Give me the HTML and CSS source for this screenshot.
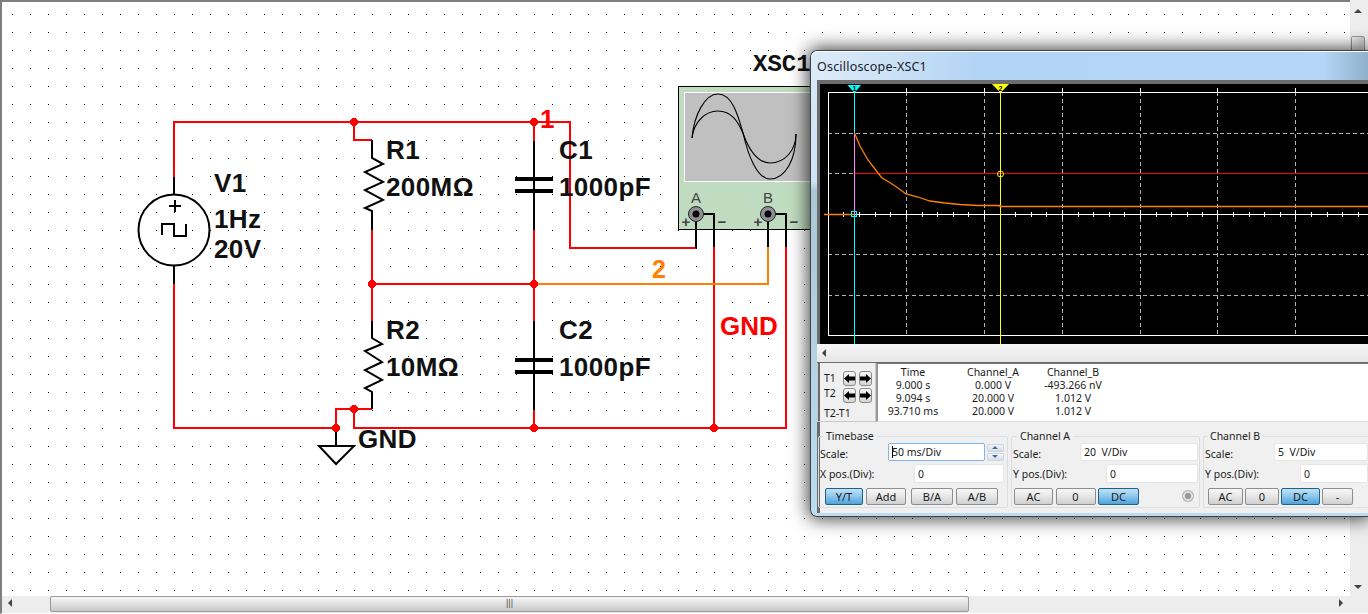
FILE: index.html
```html
<!DOCTYPE html>
<html lang="en">
<head>
<meta charset="utf-8">
<title>Oscilloscope-XSC1</title>
<link rel="stylesheet" href="styles.css">
</head>
<body>
<div class="app">
  <div class="top-row">
    <main class="canvas">
      <svg class="schematic" width="1348" height="594" viewBox="2 2 1348 594" shape-rendering="crispEdges">
        <defs>
          <pattern id="dots" x="12" y="14" width="18" height="18" patternUnits="userSpaceOnUse">
            <rect width="1" height="1" fill="#000"/>
          </pattern>
        </defs>
        <rect x="2" y="2" width="1348" height="594" fill="url(#dots)"/>

        <!-- instrument -->
        <rect class="inst" x="678.5" y="86.5" width="160" height="143"/>
        <rect class="inst-screen" x="684.5" y="92.5" width="150" height="89"/>
        <g class="sine" shape-rendering="auto">
          <path d="M692 138C694 115 705 94 718 94C732 94 738 115 743 133C748 155 757 179 770 179C785 179 796 160 796 134"/>
          <path d="M692 138C694 122 705 111 718 111C732 111 738 122 743 133C748 148 757 163 770 163C785 163 796 150 796 134"/>
        </g>
        <text class="t-term" x="696" y="203">A</text>
        <text class="t-term" x="768" y="203">B</text>
        <text class="t-sign" x="686" y="227">+</text>
        <text class="t-sign" x="722" y="227">−</text>
        <text class="t-sign" x="758" y="227">+</text>
        <text class="t-sign" x="794" y="227">−</text>

        <!-- wires -->
        <g class="wire">
          <path d="M174 177V122H570V248H696"/>
          <path d="M174 284V428H336"/>
          <path d="M354 122V140H372"/>
          <path d="M372 230V321"/>
          <path d="M372 284H534"/>
          <path d="M534 122V141"/>
          <path d="M534 230V321"/>
          <path d="M534 410V428"/>
          <path d="M372 409H336V428"/>
          <path d="M354 409V428H786V247"/>
          <path d="M714 428V247"/>
        </g>
        <path class="wire-o" d="M534 284H768V247"/>

        <!-- black leads -->
        <g class="lead">
          <path d="M174 177V195M174 265V284"/>
          <path d="M372 140V158L383 164L365 172L383 182L365 190L383 200L365 208L372 211V230" shape-rendering="auto"/>
          <path d="M372 321V338L382 344L365 351L382 362L365 370L382 380L365 388L372 392V409" shape-rendering="auto"/>
          <path d="M534 141V230M534 321V410"/>
          <path d="M336 428V446"/>
          <path d="M696 214V248M700 214H714V247"/>
          <path d="M768 214V247M772 214H786V247"/>
        </g>
        <g class="plate">
          <path d="M515 179H553M515 191H553M515 360H553M515 372H553"/>
        </g>
        <path class="lead" shape-rendering="auto" d="M319 446H354L336 464Z"/>

        <!-- source -->
        <circle class="lead-c" cx="174" cy="230" r="35.5" shape-rendering="auto"/>
        <path class="lead" d="M169 206H181M175 200V212M162 235V224H174V236H186V224"/>

        <!-- nodes -->
        <g class="node">
          <circle cx="354" cy="122" r="4"/>
          <circle cx="534" cy="122" r="4"/>
          <circle cx="372" cy="284" r="4"/>
          <circle cx="534" cy="428" r="4"/>
          <circle cx="714" cy="428" r="4"/>
          <circle cx="336" cy="428" r="4"/>
          <circle cx="354" cy="409" r="4"/>
        </g>
        <circle class="node-o" cx="534" cy="284" r="4"/>

        <!-- terminals -->
        <g shape-rendering="auto">
          <circle class="term" cx="696" cy="214" r="7.5"/>
          <circle class="term-dot" cx="696" cy="214" r="3.5"/>
          <circle class="term" cx="768" cy="214" r="7.5"/>
          <circle class="term-dot" cx="768" cy="214" r="3.5"/>
        </g>

        <!-- labels -->
        <g class="t-part">
          <text x="214" y="192">V1</text>
          <text x="214" y="228">1Hz</text>
          <text x="214" y="258">20V</text>
          <text x="386" y="159">R1</text>
          <text x="386" y="196">200MΩ</text>
          <text x="559" y="159">C1</text>
          <text x="559" y="196">1000pF</text>
          <text x="386" y="339">R2</text>
          <text x="386" y="376">10MΩ</text>
          <text x="559" y="339">C2</text>
          <text x="559" y="376">1000pF</text>
          <text x="358" y="448">GND</text>
        </g>
        <text class="t-net" x="540" y="128">1</text>
        <text class="t-net-o" x="652" y="278">2</text>
        <text class="t-net" x="720" y="335">GND</text>
        <text class="t-inst" x="753" y="71">XSC1</text>
      </svg>
    </main>
    <aside class="vscroll">
      <span class="arrow-up"></span>
      <span class="vthumb"></span>
      <span class="arrow-down"></span>
    </aside>
  </div>
  <div class="hscroll">
    <span class="arrow-left"></span>
    <span class="hthumb">|||</span>
    <span class="arrow-right"></span>
  </div>

  <section class="win">
    <header class="win-title">Oscilloscope-XSC1</header>
    <div class="win-body">
      <svg class="scope" width="548" height="260" viewBox="820 84 548 260" shape-rendering="crispEdges">
        <rect x="820" y="84" width="548" height="260" fill="#000"/>
        <g class="grid-dash">
          <path d="M906.5 92V335M984.5 92V335M1062.5 92V335M1140.5 92V335M1217.5 92V335M1295.5 92V335"/>
          <path d="M828 133.5H1368M828 173.5H1368M828 254.5H1368M828 295.5H1368"/>
        </g>
        <g class="grid-solid">
          <path d="M828.5 335V92.5H1368M828 335.5H1368"/>
          <path d="M824 214.5H1368"/>
          <path d="M843.5 212V217M859.5 212V217M875.5 212V217M890.5 212V217M906.5 210V219M922.5 212V217M937.5 212V217M953.5 212V217M968.5 212V217M984.5 210V219M1015.5 212V217M1031.5 212V217M1046.5 212V217M1062.5 210V219M1078.5 212V217M1093.5 212V217M1109.5 212V217M1124.5 212V217M1140.5 210V219M1156.5 212V217M1171.5 212V217M1187.5 212V217M1202.5 212V217M1217.5 210V219M1233.5 212V217M1249.5 212V217M1264.5 212V217M1280.5 212V217M1295.5 210V219M1311.5 212V217M1327.5 212V217M1342.5 212V217M1358.5 212V217"/>
          <path d="M1140.5 88V92M1217.5 88V92M1295.5 88V92M906.5 88V92M984.5 88V92M1062.5 88V92"/>
        </g>
        <path class="cur-red" d="M854 173.5H1368"/>
        <path class="cur-cyan" d="M854.5 92V345"/>
        <path class="cur-yellow" d="M1000.5 92V345"/>
        <path class="cur-pink" d="M854.5 133V214"/>
        <path class="trace" shape-rendering="auto" d="M824 214.5H854M854.5 133L860 146L868 160L878 173L882 178L889 182L898 188L906 194L918 197L930 201L945 203L960 204.5L978 205.5L1000 205.5V206.5H1368"/>
        <path class="tri-c" d="M847.5 85H861L854.5 93Z" shape-rendering="auto"/>
        <path class="tri-y" d="M992 84H1009L1000.5 93Z" shape-rendering="auto"/>
        <text class="tri-n" x="854.5" y="91">1</text>
        <text class="tri-n" x="1000.5" y="91">2</text>
        <rect class="mark-c" x="851.5" y="211.5" width="5" height="5"/>
        <circle class="mark-y" cx="1000.5" cy="174" r="3" shape-rendering="auto"/>
      </svg>
      <div class="strip"><span class="arrow-left"></span></div>

      <div class="read-row">
        <div class="tpanel">
          <div class="trow">
            <span class="tlabel">T1</span>
            <button class="tbtn"><svg width="11" height="9" viewBox="0 0 11 9"><path d="M0 4.5L5 0V2.5H11V6.5H5V9Z"/></svg></button>
            <button class="tbtn"><svg width="11" height="9" viewBox="0 0 11 9"><path d="M11 4.5L6 0V2.5H0V6.5H6V9Z"/></svg></button>
          </div>
          <div class="trow">
            <span class="tlabel">T2</span>
            <button class="tbtn"><svg width="11" height="9" viewBox="0 0 11 9"><path d="M0 4.5L5 0V2.5H11V6.5H5V9Z"/></svg></button>
            <button class="tbtn"><svg width="11" height="9" viewBox="0 0 11 9"><path d="M11 4.5L6 0V2.5H0V6.5H6V9Z"/></svg></button>
          </div>
          <div class="tlabel tdiff">T2-T1</div>
        </div>
        <div class="readout">
          <span>Time</span><span>Channel_A</span><span>Channel_B</span>
          <span>9.000 s</span><span>0.000 V</span><span>-493.266 nV</span>
          <span>9.094 s</span><span>20.000 V</span><span>1.012 V</span>
          <span>93.710 ms</span><span>20.000 V</span><span>1.012 V</span>
        </div>
      </div>

      <div class="controls">
        <fieldset class="group g-time">
          <legend>Timebase</legend>
          <div class="row r1"><label>Scale:</label><span class="input focus w97"><i class="caret"></i>50 ms/Div</span>
            <span class="spin"><b class="up"></b><b class="down"></b></span></div>
          <div class="row r2"><label>X pos.(Div):</label><span class="input w90">0</span></div>
          <div class="btns b-time">
            <button class="btn on w38">Y/T</button><button class="btn w40">Add</button><button class="btn w42 ml5">B/A</button><button class="btn w42">A/B</button>
          </div>
        </fieldset>
        <fieldset class="group g-a">
          <legend>Channel A</legend>
          <div class="row r1"><label>Scale:</label><span class="input w118">20&nbsp; V/Div</span></div>
          <div class="row r2"><label>Y pos.(Div):</label><span class="input w92">0</span></div>
          <div class="btns b-a">
            <button class="btn w39">AC</button><button class="btn w40">0</button><button class="btn on w41">DC</button>
            <span class="led"></span>
          </div>
        </fieldset>
        <fieldset class="group g-b">
          <legend>Channel B</legend>
          <div class="row r1"><label>Scale:</label><span class="input w94">5&nbsp; V/Div</span></div>
          <div class="row r2"><label>Y pos.(Div):</label><span class="input w68">0</span></div>
          <div class="btns b-b">
            <button class="btn w35">AC</button><button class="btn w34">0</button><button class="btn on w39">DC</button><button class="btn w31">-</button>
          </div>
        </fieldset>
      </div>
    </div>
  </section>
</div>
</body>
</html>
```

FILE: styles.css
```css
* { box-sizing: border-box; }
html, body { margin: 0; height: 100%; }
body { overflow: hidden; background: #fff; font-family: "Noto Sans", "Liberation Sans", sans-serif; }

.app { position: relative; width: 1368px; height: 614px; display: flex; flex-direction: column; overflow: hidden; background: #fff; }
.top-row { display: flex; height: 596px; }
.canvas { width: 1350px; height: 596px; border-top: 2px solid #7e7e7e; border-left: 2px solid #7e7e7e; background: #fff; }
.schematic { display: block; }

/* schematic */
.wire { fill: none; stroke: #ff0000; stroke-width: 2; }
.wire-o { fill: none; stroke: #ff8000; stroke-width: 2; }
.lead { fill: none; stroke: #000; stroke-width: 2; }
.lead-c { fill: none; stroke: #000; stroke-width: 2; }
.plate { fill: none; stroke: #000; stroke-width: 4; }
.node { fill: #ff0000; }
.node-o { fill: #ff0000; }
.inst { fill: #c0dcc0; stroke: #000; stroke-width: 1; }
.inst-screen { fill: #c0c0c0; stroke: #fff; stroke-width: 1; }
.sine { fill: none; stroke: #000; stroke-width: 1.1; }
.term { fill: #8f8f98; stroke: #222; stroke-width: 1; }
.term-dot { fill: #000; }
.t-part { font: bold 26px "Liberation Sans", sans-serif; letter-spacing: .4px; fill: #111; }
.t-net { font: bold 26px "Liberation Sans", sans-serif; fill: #ff0000; }
.t-net-o { font: bold 25px "Liberation Sans", sans-serif; fill: #ff8000; }
.t-inst { font: bold 24px "Liberation Mono", monospace; fill: #111; }
.t-term { font: 15px "Liberation Sans", sans-serif; fill: #444; text-anchor: middle; }
.t-sign { font: bold 15px "Liberation Sans", sans-serif; fill: #444; text-anchor: middle; }

/* main scrollbars */
.vscroll { position: relative; width: 18px; height: 596px; background: #ededed; }
.vthumb { position: absolute; left: 1px; top: 36px; width: 14px; height: 300px; border: 1px solid #9a9a9a; border-radius: 2px; background: linear-gradient(90deg, #f6f6f6, #c9c9c9); }
.arrow-up { position: absolute; left: 4px; top: 9px; width: 0; height: 0; border-left: 4px solid transparent; border-right: 4px solid transparent; border-bottom: 4px solid #444; }
.arrow-down { position: absolute; left: 4px; top: 585px; width: 0; height: 0; border-left: 4px solid transparent; border-right: 4px solid transparent; border-top: 4px solid #444; }
.hscroll { position: relative; height: 18px; background: #ededed; border-left: 2px solid #7e7e7e; border-bottom: 1px solid #fff; }
.hthumb { position: absolute; left: 48px; top: 0; width: 919px; height: 16px; border: 1px solid #9a9a9a; border-radius: 2px; background: linear-gradient(#f6f6f6, #c8c8c8); font: 9px/13px "Liberation Sans", sans-serif; color: #555; text-align: center; }
.arrow-left { position: absolute; width: 0; height: 0; border-top: 4px solid transparent; border-bottom: 4px solid transparent; border-right: 4px solid #444; }
.arrow-right { position: absolute; width: 0; height: 0; border-top: 4px solid transparent; border-bottom: 4px solid transparent; border-left: 4px solid #444; }
.hscroll .arrow-left { left: 6px; top: 3px; }
.hscroll .arrow-right { left: 1337px; top: 3px; }

/* oscilloscope window */
.win { position: absolute; left: 810px; top: 50px; width: 558px; height: 467px; display: flex; flex-direction: column; border: 1px solid #3c4248; border-right: 0; border-radius: 7px 0 0 7px; padding: 0 0 3px 6px; background: linear-gradient(#d9e9f7 0, #cfe3f5 28%, #a9c9d6 30%, #bcdcf3 100%); box-shadow: 0 0 18px 2px rgba(0, 0, 0, .75); font-size: 10.5px; color: #1a1a1a; }
.win-title { height: 29px; margin-left: -6px; padding: 6px 0 0 6px; border-top: 1px solid #fff; border-radius: 7px 0 0 0; background: linear-gradient(90deg, #dcebf8 0, #cfe3f6 12%, #b2d4f5 30%, #b5d6f6 92%, #8fb1cc 100%); font-size: 12.5px; letter-spacing: .2px; line-height: 17px; color: #16202a; }
.win-body { flex: 1; display: flex; flex-direction: column; background: #f0f0f0; border-top: 4px solid #6c6c6c; border-left: 3px solid #6c6c6c; min-height: 0; }
.scope { display: block; flex: none; }
.grid-dash { fill: none; stroke: #b4b4b4; stroke-width: 1; stroke-dasharray: 4 3; }
.grid-solid { fill: none; stroke: #fff; stroke-width: 1; }
.cur-cyan { stroke: #00ffff; stroke-width: 1; }
.cur-yellow { stroke: #ffff00; stroke-width: 1; }
.cur-pink { stroke: #ff80ff; stroke-width: 1; }
.cur-red { stroke: #ff0000; stroke-width: 1; }
.trace { fill: none; stroke: #ff8000; stroke-width: 1.3; }
.tri-c { fill: #00ffff; }
.tri-y { fill: #ffff00; }
.tri-n { font: bold 7px "Liberation Sans", sans-serif; fill: #000; text-anchor: middle; }
.mark-c { fill: none; stroke: #00ffff; }
.mark-y { fill: none; stroke: #ffff00; stroke-width: 1; }

.strip { position: relative; flex: none; height: 19px; margin-left: -3px; margin-top: 0; border-bottom: 1px solid #6c6c6c; background: linear-gradient(#f6f6f6, #e6e6e6); }
.strip .arrow-left { left: 5px; top: 5px; }

.read-row { flex: none; display: flex; height: 59px; margin-left: -3px; }
.tpanel { width: 59px; flex: none; padding: 7px 0 0 6px; border: 1px solid #c9c9c9; border-top: 0; }
.trow { display: flex; align-items: center; height: 17px; }
.trow + .trow .tlabel { margin-bottom: 4px; }
.tlabel { width: 20px; font-size: 10.5px; line-height: 13px; }
.tdiff { width: auto; margin-top: 3px; }
.tbtn { display: flex; align-items: center; justify-content: center; width: 14px; height: 15px; padding: 0; margin-right: 3px; border: 1px solid #8a8a8a; border-radius: 3px; background: linear-gradient(#f8f8f8, #d6d6d6); }
.tbtn svg { display: block; width: 11px; height: 9px; fill: #000; }
.readout { flex: 1; display: grid; grid-template-columns: 70px 90px 70px; grid-auto-rows: 13px; align-content: start; padding-top: 2px; background: #fff; border-top: 1px solid #777; border-left: 2px solid #999; border-bottom: 1px solid #ddd; line-height: 13px; text-align: center; white-space: nowrap; }

.controls { flex: 1; display: flex; gap: 3px; margin-left: -3px; padding: 8px 0 5px 1px; align-items: stretch; }
.group { margin: 0; padding: 0; min-width: 0; border: 1px solid #d7dfe4; border-radius: 2px; }
.group legend { padding: 0 3px; font-size: 10.5px; line-height: 13px; color: #222; }
.g-time { width: 190px; } .g-time legend { margin-left: 4px; }
.g-a { width: 189px; } .g-a legend { margin-left: 5px; }
.g-b { flex: 1; border-right: 0; } .g-b legend { margin-left: 3px; }
.row { display: flex; align-items: center; }
.row label { margin-right: auto; padding-left: 1px; position: relative; top: 2px; }
.r1 { height: 18px; margin-top: 0; }
.r2 { height: 19px; margin-top: 3px; }
.r2 label { top: 0; }
.input { display: flex; align-items: center; height: 100%; padding-left: 3px; background: #fff; border: 1px solid #e6e6e6; border-radius: 2px; font-size: 10.5px; white-space: pre; }
.input.focus { border-color: #7eb4ea; padding-left: 3px; }
.caret { display: inline-block; width: 1px; height: 12px; margin-right: -1px; background: #000; }
.g-time .row { padding-right: 3px; }
.g-a .row { padding-right: 1px; }
.w97 { width: 97px; } .w90 { width: 90px; } .w118 { width: 118px; } .w92 { width: 92px; } .w94 { width: 94px; } .w68 { width: 68px; }
.spin { display: flex; flex-direction: column; gap: 1px; width: 17px; height: 17px; margin-left: 2px; }
.spin b { position: relative; flex: 1; background: linear-gradient(#f4f6f8, #d6dde6); border: 1px solid #cfd6de; border-radius: 1px; }
.spin .up::after, .spin .down::after { content: ""; position: absolute; left: 4px; top: 1px; border-left: 3px solid transparent; border-right: 3px solid transparent; }
.spin .up::after { border-bottom: 3px solid #4a6a9a; }
.spin .down::after { border-top: 3px solid #4a6a9a; }
.btns { display: flex; align-items: center; height: 17px; margin-top: 5px; gap: 3px; }
.b-time { padding-left: 6px; }
.b-a { padding-left: 2px; gap: 2.5px; position: relative; }
.b-b { padding-left: 4px; gap: 2px; }
.btn { height: 17px; padding: 0; border: 1px solid #8e8e8e; border-radius: 2px; background: linear-gradient(#f7f7f7 0, #e6e6e6 50%, #cfcfcf 100%); font: 11px/14px "Noto Sans", "Liberation Sans", sans-serif; color: #1a1a1a; }
.btn.on { border-color: #1f5f8a; background: linear-gradient(#bfe1f6 0, #8cc6ec 50%, #4fa3dc 100%); }
.w38 { width: 38px; } .w40 { width: 40px; } .w42 { width: 42px; } .ml5 { margin-left: 2px; }
.w39 { width: 39px; } .w41 { width: 41px; } .w35 { width: 35px; } .w34 { width: 34px; } .w31 { width: 31px; }
.led { position: absolute; left: 170px; top: 2px; width: 12px; height: 12px; border-radius: 50%; background: radial-gradient(circle, #9a9a9a 0 3px, #e4e4e4 3.5px 4.5px, #b4b4b4 5px); }
```
